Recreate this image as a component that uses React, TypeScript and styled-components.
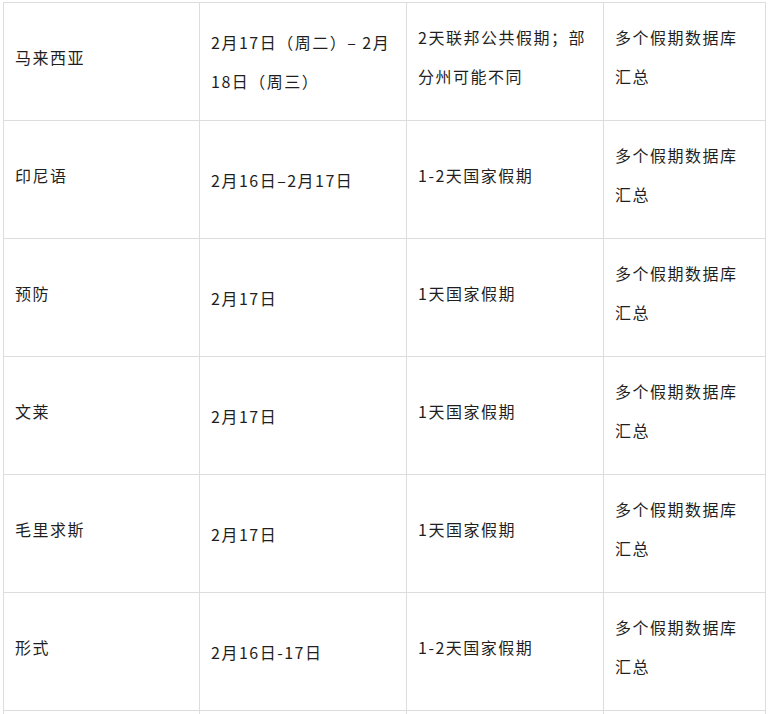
import React, { FC } from 'react';
import styled, { createGlobalStyle } from 'styled-components';

const COLORS = {
  text: '#1f1f1f',
  border: '#dddddd',
  white: '#ffffff',
};

interface holidayRow {
  country: string;
  dates: string;
  holiday: string;
  source: string;
};

const ROWS: holidayRow[] = [
  {
    country: '马来西亚',
    dates: '2月17日（周二）– 2月18日（周三）',
    holiday: '2天联邦公共假期；部分州可能不同',
    source: '多个假期数据库汇总',
  },
  { country: '印尼语', dates: '2月16日–2月17日', holiday: '1-2天国家假期', source: '多个假期数据库汇总' },
  { country: '预防', dates: '2月17日', holiday: '1天国家假期', source: '多个假期数据库汇总' },
  { country: '文莱', dates: '2月17日', holiday: '1天国家假期', source: '多个假期数据库汇总' },
  { country: '毛里求斯', dates: '2月17日', holiday: '1天国家假期', source: '多个假期数据库汇总' },
  { country: '形式', dates: '2月16日-17日', holiday: '1-2天国家假期', source: '多个假期数据库汇总' },
  // next row is cut off by the bottom of the page
  { country: '', dates: '', holiday: '', source: '' },
];

const COLUMN_WIDTHS = [196, 207, 197, 162];

const GlobalStyle = createGlobalStyle`
  html, body {
    margin: 0;
    padding: 0;
    background: ${COLORS.white};
  }
  body {
    font-family: "Noto Sans CJK SC", "Noto Sans", sans-serif;
    color: ${COLORS.text};
  }
`;

const App: FC = () => {
  return (
    <Page>
      <GlobalStyle />
      <HolidayTable>
        <colgroup>
          {COLUMN_WIDTHS.map((w, i) => (
            <Column key={i} $width={w} />
          ))}
        </colgroup>
        <tbody>
          {ROWS.map((row, i) => (
            <Row key={i}>
              <Cell>{row.country}</Cell>
              <Cell $lowered>{row.dates}</Cell>
              <Cell>{row.holiday}</Cell>
              <Cell>{row.source}</Cell>
            </Row>
          ))}
        </tbody>
      </HolidayTable>
    </Page>
  );
};

const Page = styled.div`
  height: 714px;
  overflow: hidden;
  padding: 2px 0 0 3px;
  box-sizing: border-box;
`;

const HolidayTable = styled.table`
  width: 762px;
  table-layout: fixed;
  border-collapse: collapse;
  font-size: 16px;
  line-height: 39px;
  letter-spacing: 1.5px;
`;

const Column = styled.col<{ $width: number }>`
  width: ${({ $width }) => $width}px;
`;

const Row = styled.tr`
  height: 118px;
`;

const Cell = styled.td<{ $lowered?: boolean }>`
  border: 1px solid ${COLORS.border};
  padding: ${({ $lowered }) => ($lowered ? '20px 11px 19px' : '15px 11px 24px')};
  vertical-align: middle;
`;

export default App;
